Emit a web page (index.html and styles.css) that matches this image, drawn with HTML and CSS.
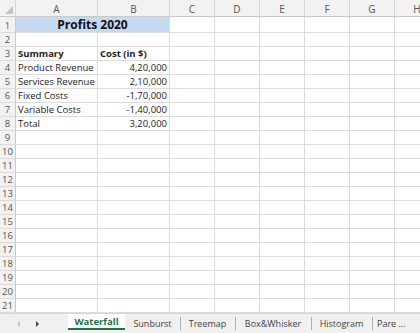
FILE: index.html
```html
<!DOCTYPE html>
<html>
<head>
<meta charset="utf-8">
<link rel="stylesheet" href="styles.css">
</head>
<body>
<div class="app">
  <div class="sheet">
    <div class="row head">
      <div class="corner"><span class="tri"></span></div>
      <div class="ch">A</div><div class="ch">B</div><div class="ch">C</div><div class="ch">D</div><div class="ch">E</div><div class="ch">F</div><div class="ch">G</div><div class="ch">H</div>
    </div>
    <div class="row r1">
      <div class="rh">1</div><div class="c title">Profits 2020</div><div class="c"></div><div class="c"></div><div class="c"></div><div class="c"></div><div class="c"></div><div class="c"></div>
    </div>
    <div class="row"><div class="rh">2</div><div class="c"></div><div class="c"></div><div class="c"></div><div class="c"></div><div class="c"></div><div class="c"></div><div class="c"></div><div class="c"></div></div>
    <div class="row"><div class="rh">3</div><div class="c b">Summary</div><div class="c b">Cost (in $)</div><div class="c"></div><div class="c"></div><div class="c"></div><div class="c"></div><div class="c"></div><div class="c"></div></div>
    <div class="row"><div class="rh">4</div><div class="c">Product Revenue</div><div class="c num">4,20,000</div><div class="c"></div><div class="c"></div><div class="c"></div><div class="c"></div><div class="c"></div><div class="c"></div></div>
    <div class="row"><div class="rh">5</div><div class="c">Services Revenue</div><div class="c num">2,10,000</div><div class="c"></div><div class="c"></div><div class="c"></div><div class="c"></div><div class="c"></div><div class="c"></div></div>
    <div class="row"><div class="rh">6</div><div class="c">Fixed Costs</div><div class="c num">-1,70,000</div><div class="c"></div><div class="c"></div><div class="c"></div><div class="c"></div><div class="c"></div><div class="c"></div></div>
    <div class="row"><div class="rh">7</div><div class="c">Variable Costs</div><div class="c num">-1,40,000</div><div class="c"></div><div class="c"></div><div class="c"></div><div class="c"></div><div class="c"></div><div class="c"></div></div>
    <div class="row"><div class="rh">8</div><div class="c">Total</div><div class="c num">3,20,000</div><div class="c"></div><div class="c"></div><div class="c"></div><div class="c"></div><div class="c"></div><div class="c"></div></div>
    <div class="row"><div class="rh">9</div><div class="c"></div><div class="c"></div><div class="c"></div><div class="c"></div><div class="c"></div><div class="c"></div><div class="c"></div><div class="c"></div></div>
    <div class="row"><div class="rh">10</div><div class="c"></div><div class="c"></div><div class="c"></div><div class="c"></div><div class="c"></div><div class="c"></div><div class="c"></div><div class="c"></div></div>
    <div class="row"><div class="rh">11</div><div class="c"></div><div class="c"></div><div class="c"></div><div class="c"></div><div class="c"></div><div class="c"></div><div class="c"></div><div class="c"></div></div>
    <div class="row"><div class="rh">12</div><div class="c"></div><div class="c"></div><div class="c"></div><div class="c"></div><div class="c"></div><div class="c"></div><div class="c"></div><div class="c"></div></div>
    <div class="row"><div class="rh">13</div><div class="c"></div><div class="c"></div><div class="c"></div><div class="c"></div><div class="c"></div><div class="c"></div><div class="c"></div><div class="c"></div></div>
    <div class="row"><div class="rh">14</div><div class="c"></div><div class="c"></div><div class="c"></div><div class="c"></div><div class="c"></div><div class="c"></div><div class="c"></div><div class="c"></div></div>
    <div class="row"><div class="rh">15</div><div class="c"></div><div class="c"></div><div class="c"></div><div class="c"></div><div class="c"></div><div class="c"></div><div class="c"></div><div class="c"></div></div>
    <div class="row"><div class="rh">16</div><div class="c"></div><div class="c"></div><div class="c"></div><div class="c"></div><div class="c"></div><div class="c"></div><div class="c"></div><div class="c"></div></div>
    <div class="row"><div class="rh">17</div><div class="c"></div><div class="c"></div><div class="c"></div><div class="c"></div><div class="c"></div><div class="c"></div><div class="c"></div><div class="c"></div></div>
    <div class="row"><div class="rh">18</div><div class="c"></div><div class="c"></div><div class="c"></div><div class="c"></div><div class="c"></div><div class="c"></div><div class="c"></div><div class="c"></div></div>
    <div class="row"><div class="rh">19</div><div class="c"></div><div class="c"></div><div class="c"></div><div class="c"></div><div class="c"></div><div class="c"></div><div class="c"></div><div class="c"></div></div>
    <div class="row"><div class="rh">20</div><div class="c"></div><div class="c"></div><div class="c"></div><div class="c"></div><div class="c"></div><div class="c"></div><div class="c"></div><div class="c"></div></div>
    <div class="row"><div class="rh">21</div><div class="c"></div><div class="c"></div><div class="c"></div><div class="c"></div><div class="c"></div><div class="c"></div><div class="c"></div><div class="c"></div></div>
  </div>
  <div class="tabbar">
    <div class="nav">
      <span class="arr left"></span>
      <span class="arr right"></span>
    </div>
    <div class="tab active">Waterfall</div>
    <div class="tab w55">Sunburst</div>
    <div class="tab w55">Treemap</div>
    <div class="tab w76">Box&amp;Whisker</div>
    <div class="tab w61">Histogram</div>
    <div class="tab last">Pare</div>
    <div class="more">...</div>
  </div>
</div>
</body>
</html>
```
FILE: styles.css
```css
* { box-sizing: border-box; }
html, body { margin: 0; padding: 0; background: #fff; }
body { font-family: "Open Sans", "Liberation Sans", sans-serif; color: #222; }
.app { width: 420px; height: 333px; overflow: hidden; }
.sheet { height: 313px; overflow: hidden; }
.row {
  display: grid;
  grid-template-columns: 16px 82px 72px 45px 45px 45px 45px 45px 45px;
  height: 14px;
  width: 440px;
}
.row.head { height: 17px; }
.row.r1 { height: 16px; }
.corner, .ch {
  background: #f2f2f2;
  border-right: 1px solid #d6d6d6;
  border-bottom: 1px solid #c9c9c9;
}
.corner { position: relative; }
.tri {
  position: absolute; right: 2px; bottom: 2px;
  width: 0; height: 0;
  border-left: 8px solid transparent;
  border-bottom: 8px solid #c2c2c2;
}
.ch {
  font-size: 10px; color: #555;
  display: flex; align-items: center; justify-content: center;
  line-height: 1; padding-top: 1px;
}
.rh {
  background: #f2f2f2;
  border-right: 1px solid #c9c9c9;
  border-bottom: 1px solid #dcdcdc;
  font-size: 9.5px; color: #555;
  display: flex; align-items: flex-end; justify-content: center;
  line-height: 12px;
}
.c {
  border-right: 1px solid #dcdcdc;
  border-bottom: 1px solid #dcdcdc;
  font-size: 9.5px;
  line-height: 12px;
  padding: 0 2px;
  display: flex; align-items: flex-end;
  white-space: nowrap; overflow: hidden;
}
.c.b { font-weight: 700; }
.c.num { justify-content: flex-end; }
.c.title {
  grid-column: span 2;
  background: #c5d9f1;
  justify-content: center; align-items: center;
  font-weight: 700; font-size: 12px; color: #111;
  padding-top: 1px;
}
.tabbar {
  height: 20px;
  background: #f0f0f0;
  border-top: 1px solid #d6d6d6;
  display: flex; align-items: stretch;
  font-size: 9px; color: #444;
  overflow: hidden;
}
.tabbar > * { flex-shrink: 0; }
.nav { width: 68px; display: flex; align-items: center; gap: 16px; padding-left: 17px; }
.arr { width: 0; height: 0; border-top: 3px solid transparent; border-bottom: 3px solid transparent; }
.arr.left { border-right: 3px solid #c4c4c4; }
.arr.right { border-left: 3px solid #444; }
.tab {
  display: flex; align-items: center; justify-content: center;
  position: relative;
  white-space: nowrap;
}
.w55 { width: 55px; }
.w76 { width: 76px; }
.w61 { width: 61px; }
.tab + .tab:not(.active)::before {
  content: ""; position: absolute; left: 0; top: 3px; height: 13px;
  border-left: 1px solid #b0b0b0;
}
.active + .tab::before { display: none; }
.tab.active {
  background: #fff;
  color: #217346; font-weight: 700;
  font-size: 9.5px;
  margin-bottom: 3px;
  border-bottom: 2px solid #217346;
  width: 57px;
}
.tab.last { padding: 0 0 0 5px; justify-content: flex-start; }
.more { display: flex; align-items: center; padding-left: 2px; color: #333; }
```
